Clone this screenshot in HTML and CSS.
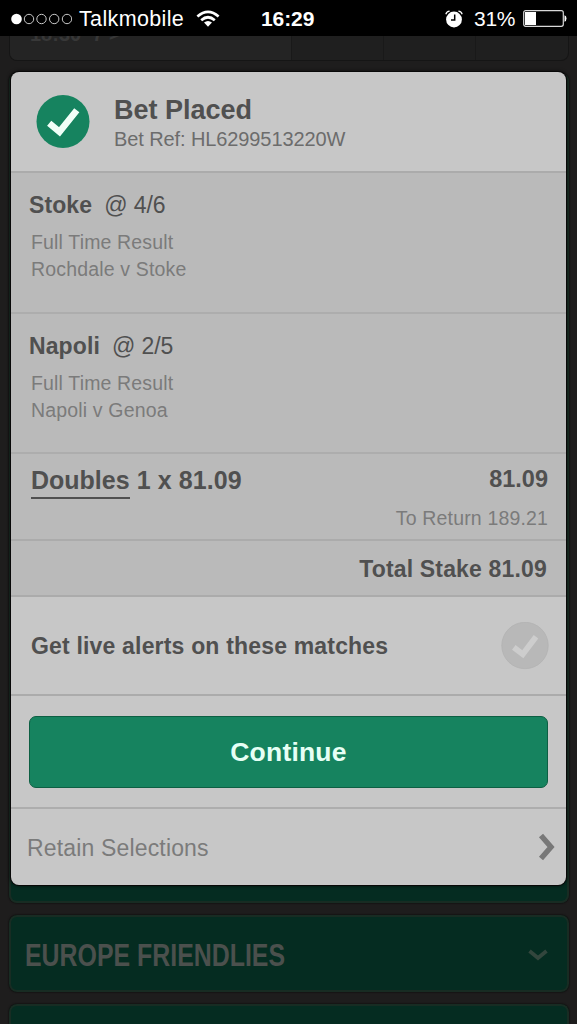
FILE: index.html
```html
<!DOCTYPE html>
<html lang="en">
<head>
<meta charset="utf-8">
<title>Bet Placed</title>
<link rel="stylesheet" href="styles.css">
</head>
<body>
<header class="status">
  <div class="carrier">
    <svg class="signal" width="62" height="14" viewBox="0 0 62 14"><circle cx="6.5" cy="7" r="5.3" fill="#fff"/><g fill="none" stroke="#c8c8c8" stroke-width="1"><circle cx="19" cy="7" r="4.7"/><circle cx="31.5" cy="7" r="4.7"/><circle cx="44.2" cy="7" r="4.7"/><circle cx="57" cy="7" r="4.7"/></g></svg>
    <span class="carrier-name">Talkmobile</span>
    <svg class="wifi" width="24" height="18" viewBox="0 0 24 18"><g fill="none" stroke="#fff" stroke-width="2.7"><path d="M1.4 6.5Q12 -2.9 22.6 6.5"/><path d="M5.2 10.2Q12 4.3 18.8 10.2"/></g><path d="M8 12.6Q12 9.3 16 12.6L12 16.8Z" fill="#fff"/></svg>
  </div>
  <span class="clock">16:29</span>
  <div class="power">
    <svg class="alarm" width="18" height="18" viewBox="0 0 18 18"><circle cx="9" cy="9.5" r="7.9" fill="#fff"/><path d="M9.7 4.5V10H6" fill="none" stroke="#000" stroke-width="1.5"/><path d="M.8 4.2Q1.7 1.5 4.6 1.2M17.2 4.2Q16.3 1.5 13.4 1.2" fill="none" stroke="#fff" stroke-width="1.2"/></svg>
    <span class="percent">31%</span>
    <svg class="battery" width="44" height="17" viewBox="0 0 44 17"><rect x=".7" y=".7" width="39.6" height="15.6" rx="2" fill="none" stroke="#d8d8d8" stroke-width="1.2"/><path d="M2 2H13V15H2Z" fill="#fff"/><path d="M41.5 5.3Q43.5 5.8 43.5 8.5T41.5 11.7Z" fill="#fff"/></svg>
  </div>
</header>
<main class="page">
  <section class="event">
    <div class="event-info"><span class="event-time">18:30&nbsp; 7 &gt;</span></div>
    <div class="odd"></div><div class="odd"></div><div class="odd"></div>
  </section>
  <section class="group group-open"></section>
  <section class="group"><span class="group-name">EUROPE FRIENDLIES</span>
    <svg class="down" width="20" height="12" viewBox="0 0 20 12"><path d="M1.5 2L10 9L18.5 2" fill="none" stroke="#33463d" stroke-width="3.8"/></svg>
  </section>
  <section class="group group-last"></section>
</main>
<div class="receipt">
  <section class="placed">
    <svg width="54" height="54" viewBox="0 0 54 54"><circle cx="27" cy="27.5" r="26.5" fill="#16835f"/><path d="M13.2 29.3L23.5 37.8L40.8 16.2" fill="none" stroke="#f0fff8" stroke-width="6.6"/></svg>
    <div><h1 class="title">Bet Placed</h1><p class="ref">Bet Ref: HL6299513220W</p></div>
  </section>
  <section class="pick">
    <h2 class="pick-name"><b class="stoke">Stoke</b><span class="odds">@ 4/6</span></h2>
    <p class="detail">Full Time Result</p><p class="detail">Rochdale v Stoke</p>
  </section>
  <section class="pick pick-second">
    <h2 class="pick-name"><b class="napoli">Napoli</b><span class="odds">@ 2/5</span></h2>
    <p class="detail">Full Time Result</p><p class="detail">Napoli v Genoa</p>
  </section>
  <section class="doubles">
    <div class="stake-line"><span class="multi"><span class="under">Doubles</span> 1 x 81.09</span><b class="amount">81.09</b></div>
    <p class="return">To Return 189.21</p>
  </section>
  <section class="total">Total Stake 81.09</section>
  <section class="alerts"><span class="alerts-text">Get live alerts on these matches</span>
    <svg width="48" height="48" viewBox="0 0 48 48"><circle cx="24" cy="23.5" r="23.2" fill="#b8b8b8" stroke="#b2b2b2" stroke-width=".8"/><path d="M12.8 25.4L21.8 32.2L35 14.8" fill="none" stroke="#cdcdcd" stroke-width="5.8"/></svg>
  </section>
  <section class="action"><button class="continue"><span class="continue-text">Continue</span></button></section>
  <section class="retain"><span class="retain-text">Retain Selections</span>
    <svg width="18" height="28" viewBox="0 0 18 28"><path d="M3 2.5L13 14L3 25.5" fill="none" stroke="#787878" stroke-width="5.4"/></svg>
  </section>
</div>
</body>
</html>
```
FILE: styles.css
```css
* { box-sizing: border-box; }
body { margin: 0; width: 577px; height: 1024px; overflow: hidden; position: relative; display: flex; flex-direction: column; background: #1e1d1d; font-family: "Liberation Sans", Arial, sans-serif; white-space: nowrap; }
h1, h2, p { margin: 0; font-weight: 400; }
svg { display: block; flex: none; }
.status { height: 36px; flex: none; background: #000; color: #fff; display: grid; grid-template-columns: 261px 1fr auto; align-items: center; padding: 1px 10px 0 0; }
.carrier, .power { display: flex; align-items: center; }
.signal { margin-left: 10px; }
.carrier-name { font-size: 21.5px; line-height: 22px; margin-left: 7px; width: 107px; letter-spacing: .35px; }
.wifi { margin-left: 10px; }
.clock { font-size: 21px; font-weight: 700; letter-spacing: -.1px; }
.percent { font-size: 21px; margin: 0 8px 0 11px; width: 41px; letter-spacing: -.3px; }
.page { flex: none; height: 988px; overflow: hidden; display: flex; flex-direction: column; gap: 12px; padding: 0 8px 0 9px; }
.event { height: 25px; flex: none; display: grid; grid-template-columns: 281px 92px 92px 1fr; border: 1px solid #151515; border-top: 0; border-radius: 0 0 8px 8px; background: #1f1f1f; overflow: hidden; }
.event-info { background: #242424; height: 24px; overflow: hidden; padding-left: 20px; }
.event-time { display: block; font-size: 20px; line-height: 14px; margin-top: -9px; color: #383838; font-weight: 700; }
.odd { border-left: 1px solid #191919; }
.group { height: 77px; flex: none; border: 2px solid #182c23; border-radius: 8px; background: #052c21; display: flex; align-items: center; justify-content: space-between; padding: 0 19px 0 14px; box-shadow: 0 0 2px #000; }
.group-open { height: 830px; background: linear-gradient(#1e1d1d 780px, #052c21 780px); border-top-color: #1e1d1d; }
.group-last { height: 20px; border-bottom: 0; border-radius: 8px 8px 0 0; }
.group-name { font-size: 32px; font-weight: 700; color: #4b504d; transform: scaleX(.778); transform-origin: 0 50%; width: 260px; margin-top: 3px; }
.down { margin-top: 2px; }
.receipt { position: absolute; left: 11px; top: 72px; width: 555px; height: 813px; border-radius: 8px; background: #c7c7c7; overflow: hidden; color: #505050; display: flex; flex-direction: column; box-shadow: 0 0 0 1px #080808, 0 0 4px #000; }
.receipt section { flex: none; border-bottom: 2px solid #ababab; }
.receipt .placed { height: 101px; display: flex; padding: 22px 0 0 25px; gap: 24px; }
.title { font-size: 27px; line-height: 30px; font-weight: 700; margin-top: 1px; }
.ref { font-size: 20px; line-height: 28px; color: #6c6c6c; letter-spacing: -.1px; }
.pick, .doubles, .total { background: #bababa; }
.receipt .pick { height: 141px; padding: 18px 18px 0; border-bottom: 2px solid #adadad; }
.receipt .pick-second { height: 140px; }
.pick-name { display: flex; font-size: 23px; line-height: 28px; margin-bottom: 10px; }
.pick-name b { margin-right: 12px; letter-spacing: .1px; }
.odds { letter-spacing: -.05px; }
.detail { font-size: 19.5px; line-height: 27px; padding-left: 2px; color: #7b7b7b; letter-spacing: .16px; }
.receipt .doubles { height: 87px; padding: 9px 18px 0 20px; }
.stake-line { display: flex; justify-content: space-between; }
.multi { font-size: 25px; line-height: 34px; font-weight: 700; letter-spacing: .1px; }
.under { display: inline-block; line-height: 33px; border-bottom: 2px solid #505050; letter-spacing: 0; }
.amount { font-size: 23.5px; line-height: 33px; }
.return { text-align: right; font-size: 19.5px; line-height: 24px; color: #7b7b7b; margin-top: 7px; letter-spacing: .16px; }
.receipt .total { height: 56px; line-height: 56px; text-align: right; padding-right: 19px; font-size: 23px; font-weight: 700; letter-spacing: .17px; }
.receipt .alerts { height: 99px; display: flex; align-items: center; justify-content: space-between; padding: 0 17px 0 20px; }
.alerts-text { font-size: 23px; font-weight: 700; margin-top: 2px; letter-spacing: .18px; }
.receipt .action { height: 113px; padding: 20px 18px; border-bottom: 2px solid #adadad; }
.continue { display: block; width: 519px; height: 72px; border: 1px solid #0d5f43; border-radius: 7px; background: #16835f; color: #e6fff5; font: 700 26.5px "Liberation Sans", Arial, sans-serif; padding: 1px 0 0; letter-spacing: .2px; }
.receipt .retain { height: 76px; border: 0; display: flex; align-items: center; justify-content: space-between; padding: 0 10px 0 16px; color: #7b7b7b; }
.retain-text { font-size: 23px; margin-top: 2px; letter-spacing: .16px; }
```
